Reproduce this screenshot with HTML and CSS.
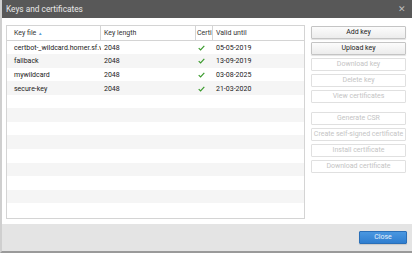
FILE: index.html
```html
<!DOCTYPE html>
<html lang="en">
<head>
  <meta charset="UTF-8">
  <title>Keys and certificates</title>
  <link rel="stylesheet" href="styles.css">
</head>
<body>
  <div class="dialog">
    <div class="dialog-title">
      <span>Keys and certificates</span>
      <span class="dialog-close">&#x2715;</span>
    </div>

    <div class="dialog-body">
      <div class="grid">
        <div class="grid-row grid-head">
          <div class="col col-file">Key file&nbsp;<span class="sort">&#x25B2;</span></div>
          <div class="col col-len">Key length</div>
          <div class="col col-cert">Certi</div>
          <div class="col col-valid">Valid until</div>
        </div>
        <div class="grid-rows">
          <div class="grid-row">
            <div class="col col-file">certbot-_wildcard.homer.sf.v</div>
            <div class="col col-len">2048</div>
            <div class="col col-cert"><svg class="check" viewBox="0 0 10 8"><path d="M1 4.2 L3.7 6.8 L9 1"/></svg></div>
            <div class="col col-valid">05-05-2019</div>
          </div>
          <div class="grid-row">
            <div class="col col-file">fallback</div>
            <div class="col col-len">2048</div>
            <div class="col col-cert"><svg class="check" viewBox="0 0 10 8"><path d="M1 4.2 L3.7 6.8 L9 1"/></svg></div>
            <div class="col col-valid">13-09-2019</div>
          </div>
          <div class="grid-row">
            <div class="col col-file">mywildcard</div>
            <div class="col col-len">2048</div>
            <div class="col col-cert"><svg class="check" viewBox="0 0 10 8"><path d="M1 4.2 L3.7 6.8 L9 1"/></svg></div>
            <div class="col col-valid">03-08-2025</div>
          </div>
          <div class="grid-row">
            <div class="col col-file">secure-key</div>
            <div class="col col-len">2048</div>
            <div class="col col-cert"><svg class="check" viewBox="0 0 10 8"><path d="M1 4.2 L3.7 6.8 L9 1"/></svg></div>
            <div class="col col-valid">21-03-2020</div>
          </div>
          <div class="grid-row"></div>
          <div class="grid-row"></div>
          <div class="grid-row"></div>
          <div class="grid-row"></div>
          <div class="grid-row"></div>
          <div class="grid-row"></div>
          <div class="grid-row"></div>
          <div class="grid-row"></div>
          <div class="grid-row"></div>
        </div>
      </div>

      <div class="actions">
        <button class="btn">Add key</button>
        <button class="btn">Upload key</button>
        <button class="btn" disabled>Download key</button>
        <button class="btn" disabled>Delete key</button>
        <button class="btn" disabled>View certificates</button>
        <div class="actions-gap"></div>
        <button class="btn" disabled>Generate CSR</button>
        <button class="btn" disabled>Create self-signed certificate</button>
        <button class="btn" disabled>Install certificate</button>
        <button class="btn" disabled>Download certificate</button>
      </div>
    </div>

    <div class="dialog-footer">
      <button class="btn btn-primary">Close</button>
    </div>
  </div>
</body>
</html>
```

FILE: styles.css
```css
* {
  margin: 0;
  padding: 0;
  box-sizing: border-box;
}

body {
  font-family: Roboto, "Liberation Sans", sans-serif;
  font-size: 7px;
  color: #222;
  background: #fff;
  width: 412px;
  height: 253px;
  overflow: hidden;
}

.dialog {
  width: 412px;
  height: 253px;
  border-left: 2px solid #cfcfcf;
  border-bottom: 2px solid #9a9a9a;
  display: flex;
  flex-direction: column;
}

.dialog-title {
  height: 18px;
  background: #585858;
  color: #e8e8e8;
  display: flex;
  align-items: center;
  justify-content: space-between;
  padding: 0 6px 0 4px;
  font-size: 8.3px;
}

.dialog-close {
  font-size: 9px;
  color: #bdbdbd;
}

.dialog-body {
  flex: 1;
  display: flex;
  gap: 6px;
  padding: 7px 5px 5px 4px;
}

.grid {
  width: 299px;
  height: 194px;
  border: 1px solid #d4d4d4;
  display: flex;
  flex-direction: column;
}

.grid-head {
  height: 15px;
  border-bottom: 1px solid #d4d4d4;
  color: #333;
}

.grid-head .col {
  border-right: 1px solid #d4d4d4;
  padding-top: 1px;
}

.grid-head .col-valid {
  border-right: none;
}

.sort {
  color: #5b9bd5;
  font-size: 4.5px;
  vertical-align: 1px;
}

.grid-rows .grid-row {
  height: 13.55px;
  padding-top: 1px;
}

.grid-rows .grid-row:nth-child(even) {
  background: #f5f5f5;
}

.grid-row {
  display: flex;
  align-items: stretch;
}

.col {
  display: flex;
  align-items: center;
  white-space: nowrap;
  overflow: hidden;
}

.col-file {
  width: 94px;
  padding-left: 7px;
}

.col-len {
  width: 95px;
  padding-left: 3px;
}

.col-cert {
  width: 17px;
  padding-left: 1px;
}

.grid-rows .col-cert {
  padding-left: 2px;
}

.col-valid {
  flex: 1;
  padding-left: 3px;
}

.check {
  width: 7px;
  height: 6px;
  fill: none;
  stroke: #3a9a2c;
  stroke-width: 1.7;
}

.actions {
  width: 95px;
  display: flex;
  flex-direction: column;
  gap: 3px;
  padding-top: 1px;
}

.actions-gap {
  height: 3px;
}

.btn {
  height: 13px;
  padding: 0;
  white-space: nowrap;
  overflow: hidden;
  font-family: Roboto, "Liberation Sans", sans-serif;
  font-size: 7px;
  color: #222;
  background: linear-gradient(#fcfcfc, #ececec);
  border: 1px solid #c4c4c4;
  border-radius: 1px;
  box-shadow: 0 1px 1px rgba(0, 0, 0, 0.12);
}

.btn:disabled {
  color: #c4c4c4;
  background: #fff;
  border-color: #e0e0e0;
  box-shadow: none;
}

.dialog-footer {
  height: 28px;
  background: #e4e4e4;
  display: flex;
  align-items: center;
  justify-content: flex-end;
  padding-right: 5px;
}

.btn-primary {
  width: 48px;
  height: 13px;
  color: #e8f1fb;
  background: linear-gradient(#4a97e0, #2f7ed0);
  border: 1px solid #2a6fb8;
}
```
